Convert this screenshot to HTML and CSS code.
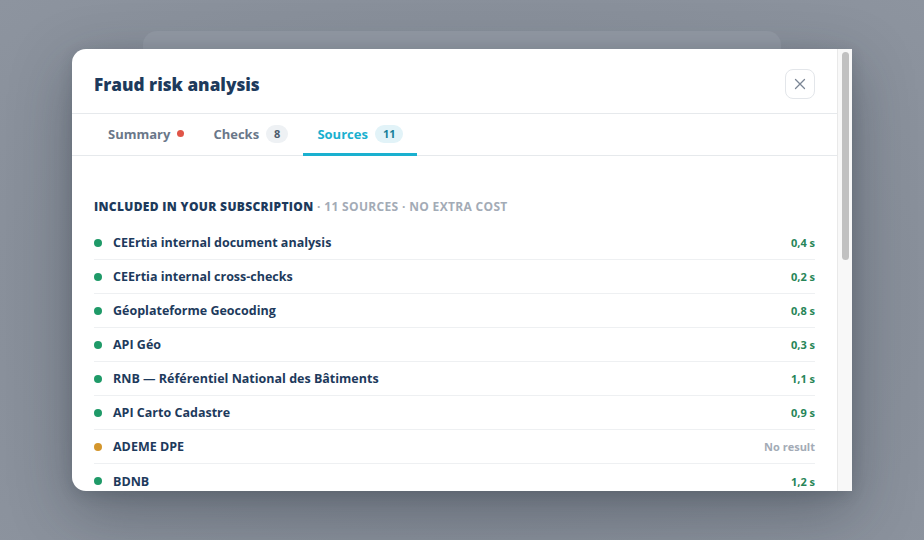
FILE: index.html
```html
<!DOCTYPE html>
<html lang="en">
<head>
<meta charset="utf-8">
<title>Fraud risk analysis</title>
<link rel="stylesheet" href="styles.css">
</head>
<body>
<div class="backdrop">
  <div class="behind-card"></div>
  <div class="modal">
    <div class="modal-main">
      <header class="modal-header">
        <h1 class="modal-title">Fraud risk analysis</h1>
        <button class="close-btn" aria-label="Close">
          <svg width="12" height="12" viewBox="0 0 12 12"><path d="M1.5 1.5 L10.5 10.5 M10.5 1.5 L1.5 10.5" stroke="#7a8594" stroke-width="1.3" stroke-linecap="round" fill="none"/></svg>
        </button>
      </header>
      <nav class="tabs">
        <div class="tab">Summary <span class="alert-dot"></span></div>
        <div class="tab">Checks <span class="badge">8</span></div>
        <div class="tab tab-active">Sources <span class="badge badge-active">11</span></div>
      </nav>
      <section class="content">
        <h2 class="section-title">Included in your subscription <span class="section-meta">· 11 sources · no extra cost</span></h2>
        <ul class="source-list">
          <li class="source"><span class="dot ok"></span><span class="name">CEErtia internal document analysis</span><span class="time">0,4 s</span></li>
          <li class="source"><span class="dot ok"></span><span class="name">CEErtia internal cross-checks</span><span class="time">0,2 s</span></li>
          <li class="source"><span class="dot ok"></span><span class="name">Géoplateforme Geocoding</span><span class="time">0,8 s</span></li>
          <li class="source"><span class="dot ok"></span><span class="name">API Géo</span><span class="time">0,3 s</span></li>
          <li class="source"><span class="dot ok"></span><span class="name">RNB — Référentiel National des Bâtiments</span><span class="time">1,1 s</span></li>
          <li class="source"><span class="dot ok"></span><span class="name">API Carto Cadastre</span><span class="time">0,9 s</span></li>
          <li class="source"><span class="dot warn"></span><span class="name">ADEME DPE</span><span class="time muted">No result</span></li>
          <li class="source"><span class="dot ok"></span><span class="name">BDNB</span><span class="time">1,2 s</span></li>
        </ul>
      </section>
    </div>
    <div class="scrollbar"><div class="thumb"></div></div>
  </div>
</div>
</body>
</html>
```
FILE: styles.css
```css
* { box-sizing: border-box; }
html, body { margin: 0; padding: 0; }
body {
  width: 924px;
  height: 540px;
  overflow: hidden;
  font-family: "Open Sans", "Noto Sans", sans-serif;
  background: #8a919c;
}
.backdrop {
  position: relative;
  width: 924px;
  height: 540px;
  background: radial-gradient(ellipse at 50% 55%, #7d8490 0%, #858c97 45%, #8d949f 100%);
  padding: 49px 0 0 72px;
}
.behind-card {
  position: absolute;
  left: 143px;
  top: 31px;
  width: 638px;
  height: 120px;
  border-radius: 14px;
  background: #9299a4;
}
.modal {
  position: relative;
  display: flex;
  width: 780px;
  height: 442px;
  background: #fff;
  border-radius: 14px 0 0 14px;
  overflow: hidden;
  box-shadow: 0 20px 60px rgba(30, 38, 50, 0.35), 0 4px 14px rgba(30, 38, 50, 0.15);
}
.modal-main {
  flex: 1;
  min-width: 0;
  overflow: hidden;
}
.scrollbar {
  width: 15px;
  flex: none;
  background: #f8f8f8;
  border-left: 1px solid #e9e9e9;
  padding: 3px 3px 0 4px;
}
.thumb {
  height: 208px;
  border-radius: 4px;
  background: #c1c1c1;
}
.modal-header {
  display: flex;
  align-items: center;
  justify-content: space-between;
  height: 65px;
  padding: 6px 22px 0;
  border-bottom: 1px solid #e6e9ec;
}
.modal-title {
  margin: 0;
  font-size: 17.2px;
  font-weight: 800;
  color: #1d3a5c;
}
.close-btn {
  width: 30px;
  height: 30px;
  border: 1px solid #e3e6ea;
  border-radius: 8px;
  background: #fff;
  display: flex;
  align-items: center;
  justify-content: center;
  padding: 0;
}
.tabs {
  display: flex;
  gap: 1px;
  height: 42px;
  padding: 0 22px;
  border-bottom: 1px solid #e6e9ec;
}
.tab {
  display: flex;
  align-items: center;
  gap: 7px;
  padding: 0 14px;
  font-size: 13px;
  font-weight: 700;
  color: #6a7789;
  border-bottom: 2px solid transparent;
  margin-bottom: -1px;
}
.tab-active {
  color: #1ab0cf;
  border-bottom: 3px solid #1ab0cf;
  padding-top: 1px;
}
.alert-dot {
  width: 7px;
  height: 7px;
  border-radius: 50%;
  background: #e05548;
  margin-top: -1px;
}
.badge {
  font-size: 11px;
  font-weight: 700;
  color: #4d5b6c;
  background: #eef1f4;
  border-radius: 9px;
  padding: 1px 8px;
  line-height: 16px;
}
.badge-active {
  background: #e2f3f8;
  color: #177f99;
}
.content {
  padding: 42px 22px 40px;
}
.section-title {
  margin: 0 0 10px;
  font-size: 12px;
  font-weight: 800;
  text-transform: uppercase;
  letter-spacing: 0.33px;
  color: #1d3a5c;
  line-height: 18px;
}
.section-meta {
  font-weight: 700;
  color: #a3abb6;
}
.source-list {
  list-style: none;
  margin: 0;
  padding: 0;
}
.source {
  display: flex;
  align-items: center;
  height: 34px;
  border-bottom: 1px solid #eef0f2;
}
.source:last-child { border-bottom: none; }
.dot {
  width: 8px;
  height: 8px;
  border-radius: 50%;
  margin-right: 11px;
  flex: none;
}
.ok { background: #1f9a68; }
.warn { background: #d4962c; }
.name {
  flex: 1;
  font-size: 12.5px;
  font-weight: 700;
  color: #1d3a5c;
}
.time {
  font-size: 11px;
  font-weight: 700;
  color: #278558;
}
.time.muted { color: #a3abb6; }
```
